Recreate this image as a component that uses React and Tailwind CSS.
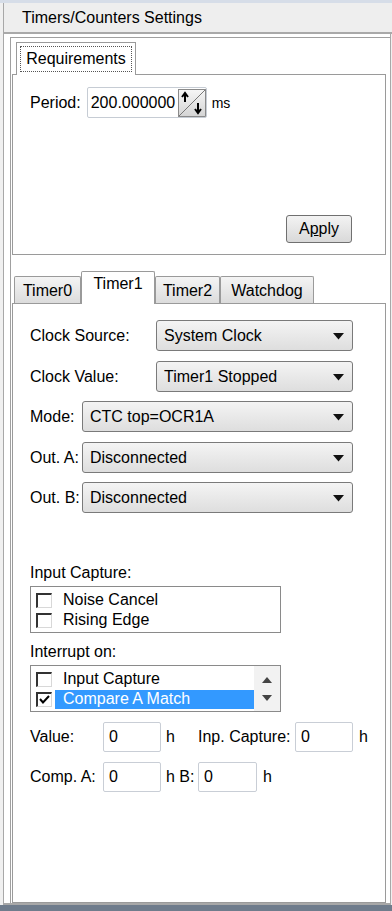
import React from "react";

const font = "font-['Liberation_Sans',Arial,sans-serif]";

function Select({ value, className = "" }) {
  return (
    <div
      className={`relative h-[31px] border border-[#7a7a7a] rounded-[3px] bg-gradient-to-b from-[#f4f4f4] to-[#dedede] flex items-center pl-[7px] ${className}`}
    >
      <span className="text-[16px] text-black">{value}</span>
      <svg className="absolute right-[8px] top-[12px]" width="11" height="7" viewBox="0 0 11 7">
        <path d="M0 0 H11 L5.5 6.5 Z" fill="#111" />
      </svg>
    </div>
  );
}

function CheckBox({ checked }) {
  return (
    <div className="w-[16px] h-[15px] border-t-2 border-l-2 border-[#333] border-r border-b border-r-[#d8d8d8] border-b-[#d8d8d8] bg-white relative shrink-0">
      {checked && (
        <svg className="absolute left-0 top-0" width="13" height="12" viewBox="0 0 13 12">
          <path d="M2 5 L5 8.5 L11 2" stroke="#000" strokeWidth="2" fill="none" />
        </svg>
      )}
    </div>
  );
}

function HexInput({ className = "" }) {
  return (
    <div
      className={`h-[30px] border border-[#c9ced6] rounded-[2px] bg-white flex items-center pl-[5px] text-[16px] ${className}`}
    >
      0
    </div>
  );
}

function Tab({ label, active, className = "" }) {
  if (active) {
    return (
      <div
        className={`h-[33px] -mb-px border border-b-0 border-[#9a9a9a] rounded-t-[2px] bg-white flex items-start justify-center pt-[4px] relative z-10 ${className}`}
      >
        {label}
      </div>
    );
  }
  return (
    <div
      className={`h-[27px] border border-b-0 border-[#9a9a9a] rounded-t-[2px] bg-gradient-to-b from-[#f4f4f4] to-[#dcdcdc] flex items-center justify-center pt-[2px] ${className}`}
    >
      {label}
    </div>
  );
}

export default function App() {
  return (
    <div className={`${font} w-[392px] h-[911px] bg-[#f0f0f0] flex flex-col text-black text-[16px] leading-none overflow-hidden`}>
      <div className="h-[3px] bg-[#d6dde8]" />
      <div className="ml-[3px] h-[29px] border-l border-[#a8a8a8] bg-[#eeeeee] flex items-center pl-[18px] text-[16px]">
        Timers/Counters Settings
      </div>
      <div className="ml-[3px] h-[2px] bg-[#a9a9a9]" />

      <div className="ml-[3px] w-[388px] h-[871px] border-l border-r border-b-2 border-[#a8a8a8] bg-white pl-[6px] pt-[3px]">
        <div className="h-[866px] border-l border-t border-[#a0a0a0] pl-[1px] pt-[4px]">
          {/* Requirements */}
          <div className="w-[374px]">
            <div className="flex pl-[4px]">
              <div className="w-[120px] h-[33px] -mb-px border border-b-0 border-[#9a9a9a] bg-white relative z-10 p-[3px]">
                <div className="h-full border border-dotted border-[#555] flex items-center justify-center">
                  Requirements
                </div>
              </div>
            </div>
            <div className="h-[181px] border border-[#9a9a9a] relative">
              <div className="flex items-center pl-[17px] pt-[12px]">
                <span>Period:</span>
                <div className="ml-[6px] w-[120px] h-[31px] border border-[#c6ccd4] rounded-[2px] flex items-center overflow-hidden">
                  <span className="pl-[3px] w-[90px] overflow-hidden whitespace-nowrap">200.000000</span>
                  <svg width="28" height="28" viewBox="0 0 28 28" className="shrink-0">
                    <defs>
                      <linearGradient id="sp" x1="0" y1="0" x2="0" y2="1">
                        <stop offset="0" stopColor="#f6f6f6" />
                        <stop offset="1" stopColor="#d4d4d4" />
                      </linearGradient>
                    </defs>
                    <rect x="0.5" y="0.5" width="27" height="27" fill="url(#sp)" stroke="#8a8a8a" />
                    <path d="M1 27 L27 1" stroke="#777" strokeWidth="1" />
                    <path d="M7 13 V5 M4 8 L7 4 L10 8" stroke="#000" strokeWidth="2" fill="none" />
                    <path d="M20 14 V23 M17 20 L20 24 L23 20" stroke="#000" strokeWidth="2" fill="none" />
                  </svg>
                </div>
                <span className="ml-[5px] text-[14px]">ms</span>
              </div>
              <button className="absolute left-[273px] top-[140px] w-[66px] h-[28px] border border-[#707070] rounded-[3px] bg-gradient-to-b from-[#f3f3f3] to-[#d9d9d9] text-[16px]">
                A<span className="underline">p</span>ply
              </button>
            </div>
          </div>

          {/* Timers */}
          <div className="w-[374px] mt-[16px]">
            <div className="flex items-end pl-[2px]">
              <Tab label="Timer0" className="w-[67px]" />
              <Tab label="Timer1" active className="w-[74px]" />
              <Tab label="Timer2" className="w-[65px]" />
              <Tab label="Watchdog" className="w-[94px]" />
            </div>
            <div className="h-[600px] border border-[#9a9a9a] pl-[17px] pt-[16px]">
              <div className="flex items-center">
                <span className="w-[126px]">Clock Source:</span>
                <Select value="System Clock" className="w-[197px]" />
              </div>
              <div className="flex items-center mt-[10px]">
                <span className="w-[126px]">Clock Value:</span>
                <Select value="Timer1 Stopped" className="w-[197px]" />
              </div>
              <div className="flex items-center mt-[9px]">
                <span className="w-[52px]">Mode:</span>
                <Select value="CTC top=OCR1A" className="w-[271px]" />
              </div>
              <div className="flex items-center mt-[10px]">
                <span className="w-[52px]">Out. A:</span>
                <Select value="Disconnected" className="w-[271px]" />
              </div>
              <div className="flex items-center mt-[9px]">
                <span className="w-[52px]">Out. B:</span>
                <Select value="Disconnected" className="w-[271px]" />
              </div>

              <div className="mt-[52px]">Input Capture:</div>
              <div className="mt-[5px] w-[251px] h-[47px] border border-[#8a8a8a] pt-[3px] pl-[5px]">
                <div className="flex items-center h-[20px]">
                  <CheckBox />
                  <span className="ml-[11px]">Noise Cancel</span>
                </div>
                <div className="flex items-center h-[20px]">
                  <CheckBox />
                  <span className="ml-[11px]">Rising Edge</span>
                </div>
              </div>

              <div className="mt-[11px]">Interrupt on:</div>
              <div className="mt-[5px] w-[251px] h-[47px] border border-[#8a8a8a] flex">
                <div className="flex-1 pt-[3px] pl-[5px]">
                  <div className="flex items-center h-[20px]">
                    <CheckBox />
                    <span className="ml-[11px]">Input Capture</span>
                  </div>
                  <div className="flex items-center h-[20px]">
                    <CheckBox checked />
                    <span className="ml-[3px] pl-[8px] flex-1 h-[19px] flex items-center bg-[#3399ff] text-white">
                      Compare A Match
                    </span>
                  </div>
                </div>
                <div className="w-[26px] bg-[#f2f2f2] flex flex-col items-center justify-center gap-[12px]">
                  <svg width="10" height="6" viewBox="0 0 10 6">
                    <path d="M0 6 L5 0 L10 6 Z" fill="#444" />
                  </svg>
                  <svg width="10" height="6" viewBox="0 0 10 6">
                    <path d="M0 0 L10 0 L5 6 Z" fill="#444" />
                  </svg>
                </div>
              </div>

              <div className="flex items-center mt-[10px]">
                <span className="w-[73px]">Value:</span>
                <HexInput className="w-[58px]" />
                <span className="ml-[5px] w-[32px]">h</span>
                <span className="w-[97px]">Inp. Capture:</span>
                <HexInput className="w-[58px]" />
                <span className="ml-[6px]">h</span>
              </div>
              <div className="flex items-center mt-[10px]">
                <span className="w-[73px]">Comp. A:</span>
                <HexInput className="w-[58px]" />
                <span className="ml-[5px] w-[32px]">h B:</span>
                <HexInput className="w-[59px]" />
                <span className="ml-[6px]">h</span>
              </div>
            </div>
          </div>
        </div>
      </div>
      <div className="flex-1 bg-[#6f7c8c]" />
    </div>
  );
}
